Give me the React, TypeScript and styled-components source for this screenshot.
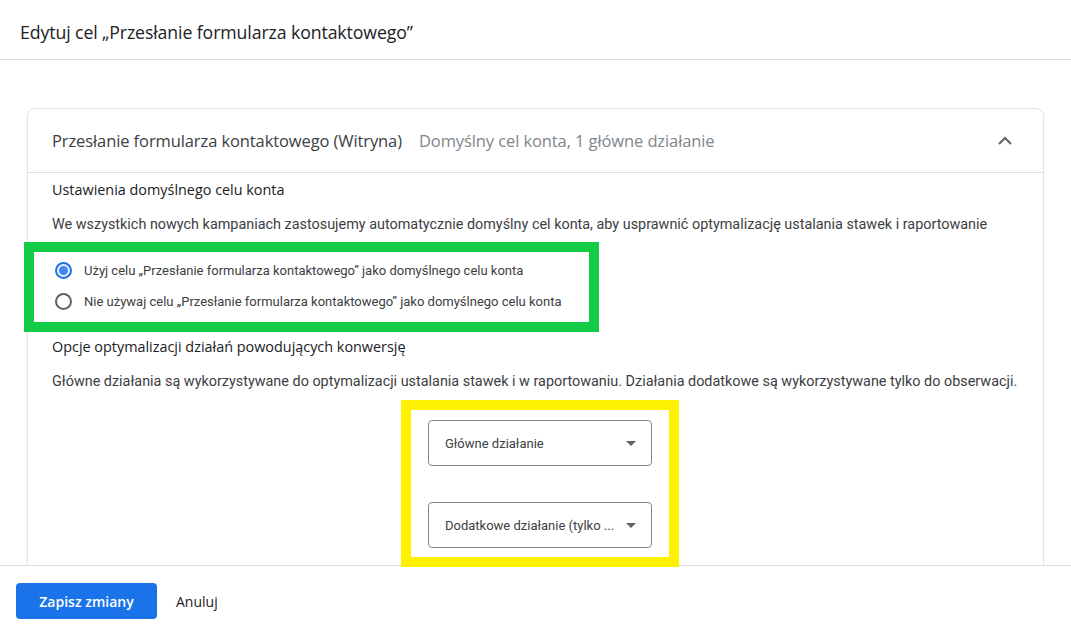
import React from 'react'
import styled, { createGlobalStyle } from 'styled-components'

const GlobalStyle = createGlobalStyle`
	html, body {
		margin: 0;
		padding: 0;
		background: #ffffff;
	}
	body {
		font-family: Roboto, 'Liberation Sans', Arial, sans-serif;
		color: #3c4043;
	}
	* {
		box-sizing: border-box;
	}
`

const HEADING_FONT = `'Open Sans', Roboto, 'Liberation Sans', sans-serif`

export default function App() {
	return (
		<>
			<GlobalStyle />
			<Page>
				<Header>
					<HeaderTitle>Edytuj cel „Przesłanie formularza kontaktowego”</HeaderTitle>
				</Header>
				<Content>
					<Card>
						<CardHeader>
							<CardTitle>Przesłanie formularza kontaktowego (Witryna)</CardTitle>
							<CardSubtitle>Domyślny cel konta, 1 główne działanie</CardSubtitle>
							<Chevron viewBox="0 0 24 24">
								<polyline points="6,15 12,9 18,15" />
							</Chevron>
						</CardHeader>
						<CardBody>
							<SectionTitle>Ustawienia domyślnego celu konta</SectionTitle>
							<BodyText $top={15}>
								We wszystkich nowych kampaniach zastosujemy automatycznie domyślny cel konta, aby usprawnić optymalizację ustalania stawek i raportowanie
							</BodyText>
							<GreenMark>
								<RadioRow>
									<Radio $checked />
									<RadioLabel>Użyj celu „Przesłanie formularza kontaktowego” jako domyślnego celu konta</RadioLabel>
								</RadioRow>
								<RadioRow>
									<Radio />
									<RadioLabel>Nie używaj celu „Przesłanie formularza kontaktowego” jako domyślnego celu konta</RadioLabel>
								</RadioRow>
							</GreenMark>
							<SectionTitle $top={5}>Opcje optymalizacji działań powodujących konwersję</SectionTitle>
							<BodyText $top={15}>
								Główne działania są wykorzystywane do optymalizacji ustalania stawek i w raportowaniu. Działania dodatkowe są wykorzystywane tylko do obserwacji.
							</BodyText>
							<YellowMark>
								<Select>
									<SelectText>Główne działanie</SelectText>
									<Caret />
								</Select>
								<Select>
									<SelectText>Dodatkowe działanie (tylko ...</SelectText>
									<Caret />
								</Select>
							</YellowMark>
						</CardBody>
					</Card>
				</Content>
				<Footer>
					<PrimaryButton>Zapisz zmiany</PrimaryButton>
					<TextButton>Anuluj</TextButton>
				</Footer>
			</Page>
		</>
	)
}

const Page = styled.div`
	width: 1071px;
	height: 628px;
	display: flex;
	flex-direction: column;
	overflow: hidden;
`

const Header = styled.header`
	height: 60px;
	flex-shrink: 0;
	display: flex;
	align-items: center;
	padding: 4px 20px 0;
	border-bottom: 1px solid #dadce0;
`

const HeaderTitle = styled.h1`
	margin: 0;
	font-family: ${HEADING_FONT};
	font-size: 17.7px;
	font-weight: 400;
	color: #202124;
	letter-spacing: -0.1px;
`

const Content = styled.main`
	flex: 1;
	min-height: 0;
	padding: 48px 27px 0;
`

const Card = styled.section`
	border-radius: 8px;
	border: 1px solid #e3e3e3;
	box-shadow: 0 1px 2px rgba(60, 64, 67, 0.12);
	background: #ffffff;
`

const CardHeader = styled.div`
	height: 64px;
	display: flex;
	align-items: center;
	padding: 0 26px 0 24px;
	border-bottom: 1px solid #e0e0e0;
`

const CardTitle = styled.span`
	font-family: ${HEADING_FONT};
	font-size: 16.5px;
	color: #3c4043;
	letter-spacing: -0.1px;
`

const CardSubtitle = styled.span`
	margin-left: 17px;
	flex: 1;
	font-family: ${HEADING_FONT};
	font-size: 16.5px;
	color: #80868b;
	letter-spacing: -0.1px;
`

const Chevron = styled.svg`
	width: 24px;
	height: 24px;
	fill: none;
	stroke: #5f6368;
	stroke-width: 2;
`

const CardBody = styled.div`
	display: flex;
	flex-direction: column;
	align-items: flex-start;
	padding: 7px 24px 40px;
`

const SectionTitle = styled.h3<{ $top?: number }>`
	margin: ${p => p.$top ?? 0}px 0 0;
	font-family: ${HEADING_FONT};
	font-size: 14.4px;
	font-weight: 400;
	line-height: 20px;
	color: #202124;
`

const BodyText = styled.p<{ $top?: number }>`
	margin: ${p => p.$top ?? 0}px 0 0;
	font-size: 14.4px;
	line-height: 20px;
	color: #3c4043;
	white-space: nowrap;
`

const GreenMark = styled.div`
	margin: 7px 0 0 -28px;
	width: 575px;
	border: 10px solid #13cc45;
	padding: 3px 0 5px 21px;
	position: relative;
	z-index: 2;
`

const RadioRow = styled.label`
	height: 31px;
	display: flex;
	align-items: center;
	gap: 12px;
`

const Radio = styled.span<{ $checked?: boolean }>`
	width: 17px;
	height: 17px;
	border-radius: 50%;
	border: 2px solid ${p => (p.$checked ? '#1a73e8' : '#5f6368')};
	display: flex;
	align-items: center;
	justify-content: center;
	background: ${p => (p.$checked ? '#e8f0fe' : '#ffffff')};

	&::after {
		content: '';
		width: 9px;
		height: 9px;
		border-radius: 50%;
		background: ${p => (p.$checked ? '#4285f4' : 'transparent')};
	}
`

const RadioLabel = styled.span`
	font-size: 13px;
	color: #3c4043;
`

const YellowMark = styled.div`
	margin: 8px 0 0 349px;
	width: 278px;
	border: 10px solid #fff200;
	padding: 10px 17px 9px;
	display: flex;
	flex-direction: column;
	gap: 36px;
	position: relative;
	z-index: 2;
	background: #ffffff;
`

const Select = styled.div`
	height: 46px;
	border: 1px solid #80868b;
	border-radius: 4px;
	display: flex;
	align-items: center;
	padding: 0 15px 0 16px;
	gap: 12px;
`

const SelectText = styled.span`
	flex: 1;
	min-width: 0;
	font-size: 13px;
	color: #3c4043;
	white-space: nowrap;
`

const Caret = styled.span`
	width: 0;
	height: 0;
	border-left: 5px solid transparent;
	border-right: 5px solid transparent;
	border-top: 5px solid #5f6368;
`

const Footer = styled.footer`
	height: 63px;
	flex-shrink: 0;
	position: relative;
	z-index: 1;
	background: #ffffff;
	border-top: 1px solid #dadce0;
	display: flex;
	align-items: flex-start;
	padding: 17px 16px 0;
	gap: 11px;
`

const PrimaryButton = styled.button`
	width: 141px;
	height: 36px;
	border: none;
	border-radius: 4px;
	background: #1a73e8;
	color: #ffffff;
	font-family: ${HEADING_FONT};
	font-size: 14px;
	font-weight: 600;
	cursor: pointer;
`

const TextButton = styled.button`
	height: 36px;
	padding: 0 8px;
	border: none;
	background: transparent;
	color: #202124;
	font-family: ${HEADING_FONT};
	font-size: 14px;
	font-weight: 500;
	cursor: pointer;
`
